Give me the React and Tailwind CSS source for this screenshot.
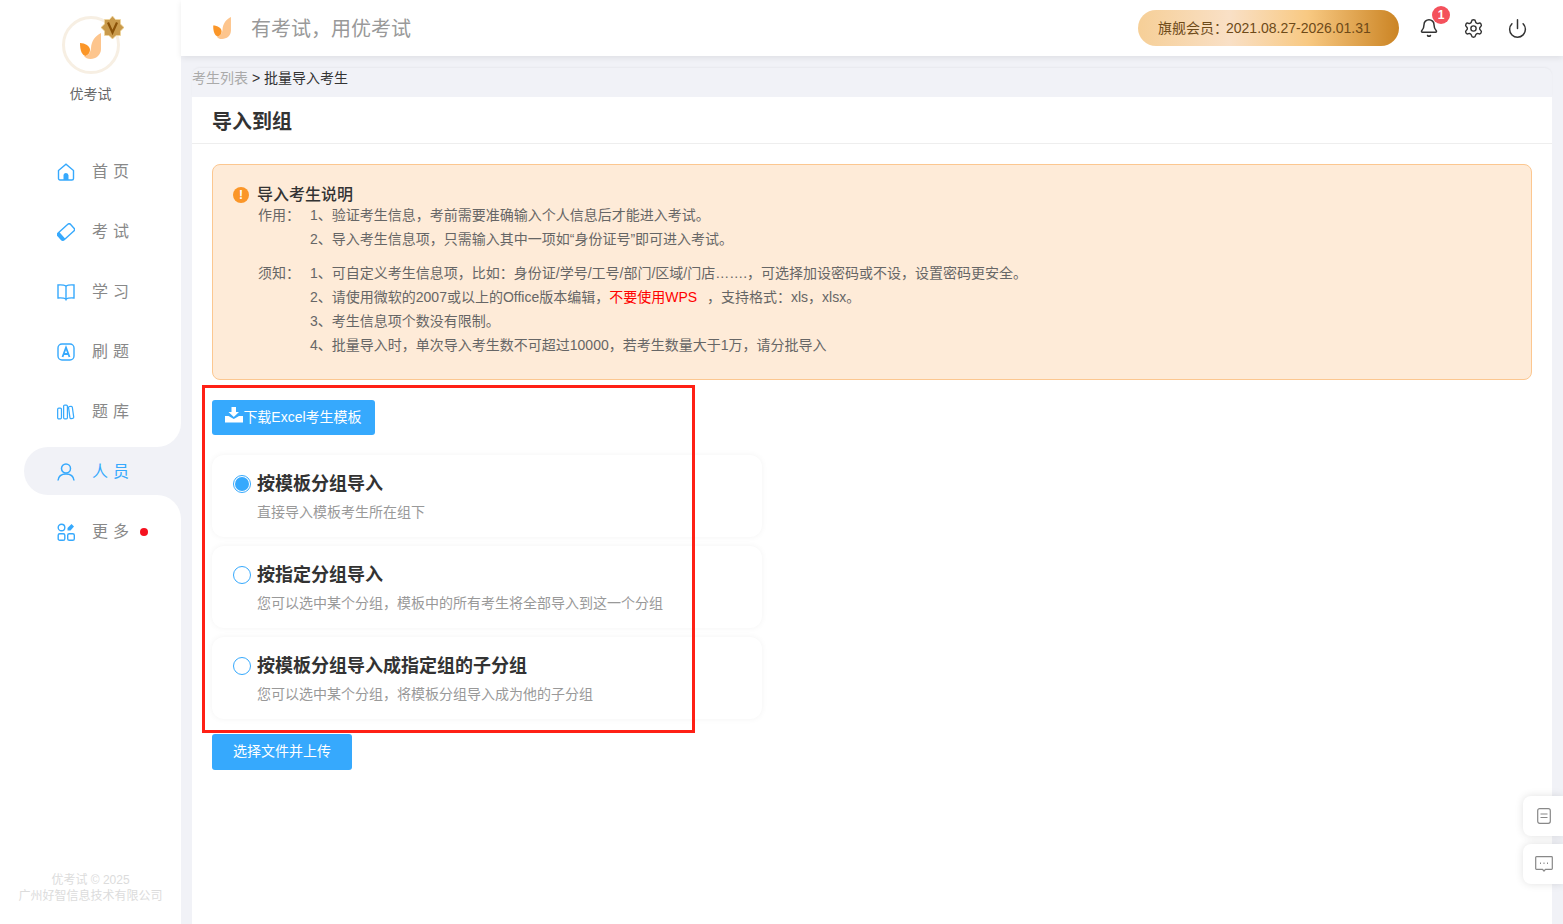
import { Bell, Settings, Power } from "lucide-react"

const font = { fontFamily: '"Liberation Sans", "Noto Sans CJK SC", sans-serif' }

function Leaf({ width, height }) {
    return (
        <svg width={width} height={height} viewBox="0 0 22 26">
            <path d="M21 0 V16 C21 22 16 26 10.500 26 C7.500 26 5.500 25 4 23 C8 23 10.500 20 11 15 C11.500 8 15 3 21 0Z" fill="#fdc58d" />
            <path d="M0 10 C5 10 10 13 10 17 C10 20 8 22 5.500 23 C2 22 0 18 0 10Z" fill="#fb9628" />
        </svg>
    )
}

function HomeIcon() {
    return (
        <svg width="18" height="18" viewBox="0 0 18 18" fill="none" stroke="#36a9fd" strokeWidth="1.400">
            <path d="M1.500 7.500 L9 1.200 L16.500 7.500 V15.500 A1.500 1.500 0 0 1 15 17 H3 A1.500 1.500 0 0 1 1.500 15.500Z" />
            <path d="M6.500 17 V12.500 A2.500 2.500 0 0 1 11.500 12.500 V17Z" fill="#36a9fd" stroke="none" />
        </svg>
    )
}

function EraserIcon() {
    return (
        <svg width="18" height="18" viewBox="0 0 18 18" fill="none" stroke="#36a9fd" strokeWidth="1.400">
            <g transform="rotate(-42 9 9)">
                <path d="M2.500 4.500 H4 V13.500 H2.500 A2 2 0 0 1 0.500 11.500 V6.500 A2 2 0 0 1 2.500 4.500Z" fill="#36a9fd" stroke="none" />
                <rect x="0.500" y="4.500" width="17" height="9" rx="2" />
            </g>
        </svg>
    )
}

function BookIcon() {
    return (
        <svg width="18" height="18" viewBox="0 0 18 18" fill="none" stroke="#36a9fd" strokeWidth="1.400">
            <path d="M9 3 C7 1.800 4 1.800 1 2 V15 C4 14.800 7 14.800 9 16 C11 14.800 14 14.800 17 15 V2 C14 1.800 11 1.800 9 3Z" />
            <path d="M9 3 V17.500" />
        </svg>
    )
}

function BrushIcon() {
    return (
        <svg width="18" height="18" viewBox="0 0 18 18" fill="none">
            <rect x="1" y="1" width="16" height="16" rx="4" stroke="#36a9fd" strokeWidth="1.400" />
            <path d="M5.500 14 L9 4.500 L12.500 14 M6.800 11 H11.200" stroke="#36a9fd" strokeWidth="1.800" />
        </svg>
    )
}

function BarsIcon() {
    return (
        <svg width="19" height="16" viewBox="0 0 19 16" fill="none" stroke="#36a9fd" strokeWidth="1.300">
            <rect x="0.700" y="4" width="4" height="11.300" rx="1.200" />
            <rect x="7" y="0.700" width="4" height="14.600" rx="1.200" />
            <rect x="13" y="2" width="4" height="13" rx="1.200" transform="rotate(-8 15 9)" />
        </svg>
    )
}

function UserIcon() {
    return (
        <svg width="18" height="18" viewBox="0 0 18 18" fill="none" stroke="#36a9fd" strokeWidth="1.500">
            <circle cx="9" cy="5.500" r="4.500" />
            <path d="M1 17.500 C1.500 13 5 11 9 11 C13 11 16.500 13 17 17.500" />
        </svg>
    )
}

function MoreIcon() {
    return (
        <svg width="18" height="18" viewBox="0 0 18 18" fill="none" stroke="#36a9fd" strokeWidth="1.400">
            <circle cx="4.500" cy="4.500" r="3.300" />
            <rect x="1.200" y="10.700" width="6.600" height="6.600" rx="1.600" />
            <rect x="10.700" y="10.700" width="6.600" height="6.600" rx="1.600" />
            <path d="M10.500 5 L14.500 1 L17 3.500 L13.500 7.500 H10.500Z" fill="#36a9fd" stroke="none" />
        </svg>
    )
}

function NavRow({ icon, label, dot, active }) {
    return (
        <div className={active ? "flex h-full items-center pl-[33px] text-[#36a9fd]" : "flex h-[60px] items-center pl-[57px] text-[#888]"}>
            <span className="flex w-[18px] justify-center">{icon}</span>
            <span className="ml-[17px] text-base tracking-[5px] whitespace-nowrap">{label}</span>
            {dot && <span className="ml-[6px] h-2 w-2 rounded-full bg-[#f5121f]"></span>}
        </div>
    )
}

function Sidebar() {
    return (
        <aside className="flex w-[181px] shrink-0 flex-col bg-white">
            <div className="flex flex-col items-center pt-[16px]">
                <div className="relative flex h-[58px] w-[58px] items-center justify-center rounded-full border-[3px] border-[#f7efe3] bg-white">
                    <span className="pt-[2px]"><Leaf width={22} height={26} /></span>
                    <svg className="absolute -top-[3px] -right-[7px]" width="23" height="23" viewBox="0 0 23 23">
                        <path d="M11.500 0 L14.500 3.500 L19.500 3.500 L19.500 8 L23 11.500 L19.500 15 L19.500 19.500 L15 19.500 L11.500 23 L8 19.500 L3.500 19.500 L3.500 15 L0 11.500 L3.500 8 L3.500 3.500 L8.500 3.500Z" fill="#c99a4b" stroke="#f0d69d" strokeWidth="0.800" />
                        <path d="M7 6.500 L11.500 16.500 L16 6.500" fill="none" stroke="#8a5208" strokeWidth="2.200" />
                    </svg>
                </div>
                <p className="mt-[10px] text-sm leading-[20px] text-[#666]">优考试</p>
            </div>

            <nav className="mt-[37px] flex flex-col pt-px">
                <NavRow icon={<HomeIcon />} label="首页" />
                <NavRow icon={<EraserIcon />} label="考试" />
                <NavRow icon={<BookIcon />} label="学习" />
                <NavRow icon={<BrushIcon />} label="刷题" />
                <div className="-mt-px bg-[#f1f2f7]">
                    <div className="h-[66px] rounded-br-[24px] bg-white pt-px pb-[5px]">
                        <NavRow icon={<BarsIcon />} label="题库" />
                    </div>
                </div>
                <div className="h-[48px] bg-white pl-[24px]">
                    <div className="h-full rounded-l-[24px] bg-[#f1f2f7] pt-px">
                        <NavRow icon={<UserIcon />} label="人员" active />
                    </div>
                </div>
                <div className="bg-[#f1f2f7]">
                    <div className="h-[66px] rounded-tr-[24px] bg-white pt-[7px]">
                        <NavRow icon={<MoreIcon />} label="更多" dot />
                    </div>
                </div>
            </nav>

            <div className="mt-auto pb-[20px] text-center text-xs leading-[16px] text-[#dcdcdc]">
                <p>优考试 © 2025</p>
                <p>广州好智信息技术有限公司</p>
            </div>
        </aside>
    )
}

function TopBar() {
    return (
        <header className="flex h-[56px] shrink-0 items-center bg-white pr-[35px] pl-[32px] shadow-[0_2px_6px_rgba(0,0,0,0.08)]">
            <Leaf width={19} height={22} />
            <p className="mt-[2px] ml-[19px] text-xl text-[#999]">有考试&#xFF0C;用优考试</p>
            <div className="ml-auto flex h-[36px] w-[261px] items-center rounded-full bg-[linear-gradient(90deg,#f6cf97_0%,#f9e0c6_35%,#f8c982_65%,#cb8424_100%)] pl-[20px] text-sm text-[#6e4a18]">
                旗舰会员&#xFF1A;<span className="-ml-[2px]">2021.08.27-2026.01.31</span>
            </div>
            <div className="relative ml-[20px]">
                <Bell size={20} color="#333" strokeWidth={1.800} />
                <span className="absolute -top-[12px] left-[13px] flex h-[18px] w-[18px] items-center justify-center rounded-full bg-[#f4515c] text-xs font-bold text-white">1</span>
            </div>
            <Settings size={21} color="#333" strokeWidth={1.600} className="ml-[24px]" />
            <Power size={21} color="#333" strokeWidth={1.700} className="ml-[23px]" />
        </header>
    )
}

function InfoRow({ label, children }) {
    return (
        <div className="flex h-[24px] items-center text-sm text-[#666]">
            <span className="w-[52px] shrink-0">{label}</span>
            <span className="whitespace-nowrap">{children}</span>
        </div>
    )
}

function Notice() {
    return (
        <div className="h-[216px] rounded-lg border border-[#fcc790] bg-[#feebd8] pt-[19px] pl-[20px]">
            <div className="flex h-[22px] items-center">
                <span className="flex h-4 w-4 items-center justify-center rounded-full bg-[#fb9628] text-xs font-bold text-white">!</span>
                <span className="ml-2 text-base font-medium text-[#333]">导入考生说明</span>
            </div>
            <div className="-mt-[3px] ml-[25px]">
                <InfoRow label={"作用\uFF1A"}>1、验证考生信息&#xFF0C;考前需要准确输入个人信息后才能进入考试。</InfoRow>
                <InfoRow>2、导入考生信息项&#xFF0C;只需输入其中一项如“身份证号”即可进入考试。</InfoRow>
                <div className="h-[10px]"></div>
                <InfoRow label={"须知\uFF1A"}>1、可自定义考生信息项&#xFF0C;比如&#xFF1A;身份证/学号/工号/部门/区域/门店…….&#xFF0C;可选择加设密码或不设&#xFF0C;设置密码更安全。</InfoRow>
                <InfoRow>2、请使用微软的2007或以上的Office版本编辑&#xFF0C;<span className="text-[#f00]">不要使用WPS</span> &nbsp;<span className="ml-[2px]">&#xFF0C;支持格式&#xFF1A;xls&#xFF0C;xlsx。</span></InfoRow>
                <InfoRow>3、考生信息项个数没有限制。</InfoRow>
                <InfoRow>4、批量导入时&#xFF0C;单次导入考生数不可超过10000&#xFF0C;若考生数量大于1万&#xFF0C;请分批导入</InfoRow>
            </div>
        </div>
    )
}

function ImportOption({ title, desc, checked }) {
    return (
        <div className="flex h-[82px] w-[550px] rounded-xl bg-white pt-[18px] pl-[21px] shadow-[0_0_6px_rgba(0,0,0,0.05)]">
            <span className="mt-[2px] flex h-[18px] w-[18px] shrink-0 items-center justify-center rounded-full border border-[#36a9fd]">
                {checked && <span className="h-[14px] w-[14px] rounded-full bg-[#36a9fd]"></span>}
            </span>
            <div className="ml-[6px]">
                <p className="text-lg leading-[22px] font-bold text-[#333]">{title}</p>
                <p className="mt-[7px] text-sm leading-[20px] text-[#999]">{desc}</p>
            </div>
        </div>
    )
}

function DownloadIcon() {
    return (
        <svg width="18" height="16" viewBox="0 0 18 16" fill="white">
            <path d="M6.500 0 H11 V5 H14 L8.800 10 L3.500 5 H6.500Z" />
            <path d="M0 9 H3.500 L8.800 12 L14 9 H18 V15.500 H0Z" />
        </svg>
    )
}

function FloatButton({ children }) {
    return (
        <div className="flex h-10 w-10 items-center justify-center rounded-l-lg bg-white pl-px shadow-[0_0_8px_rgba(0,0,0,0.12)]">
            {children}
        </div>
    )
}

export default function App() {
    return (
        <div style={font} className="relative flex h-[924px] w-[1563px] overflow-hidden bg-[#f1f2f7]">
            <Sidebar />
            <div className="flex min-w-0 flex-1 flex-col">
                <TopBar />
                <div className="mt-[12px] mr-[11px] ml-[11px] flex-1">
                    <div className="h-[29px] rounded-t-lg text-sm leading-[20px] shadow-[0_-1px_2px_rgba(0,0,0,0.04)]">
                        <span className="text-[#aaa]">考生列表</span> <span className="text-[#333]">&gt; 批量导入考生</span>
                    </div>
                    <div className="h-full bg-white">
                        <h2 className="h-[47px] border-b border-[#eee] pl-[20px] text-xl leading-[50px] font-bold text-[#333]">导入到组</h2>
                        <div className="px-[20px] pt-[20px]">
                            <Notice />
                            <button className="mt-[20px] flex h-[35px] w-[163px] items-center justify-center rounded-[3px] bg-[#36a9fd] pb-[2px] text-sm text-white">
                                <span className="-mt-1"><DownloadIcon /></span>下载Excel考生模板
                            </button>
                            <div className="mt-[20px] flex flex-col gap-[9px]">
                                <ImportOption checked title="按模板分组导入" desc="直接导入模板考生所在组下" />
                                <ImportOption title="按指定分组导入" desc={"您可以选中某个分组\uFF0C模板中的所有考生将全部导入到这一个分组"} />
                                <ImportOption title="按模板分组导入成指定组的子分组" desc={"您可以选中某个分组\uFF0C将模板分组导入成为他的子分组"} />
                            </div>
                            <button className="mt-[15px] h-[36px] w-[140px] rounded-[3px] bg-[#36a9fd] pb-[2px] text-sm text-white">选择文件并上传</button>
                        </div>
                    </div>
                </div>
            </div>

            {/* red annotation over the page */}
            <div className="absolute top-[385px] left-[202px] h-[348px] w-[493px] border-[3px] border-[#ff2015]"></div>

            <div className="absolute top-[796px] right-0 flex flex-col gap-2">
                <FloatButton>
                    <svg width="14" height="16" viewBox="0 0 14 16" fill="none" stroke="#888" strokeWidth="1.200">
                        <rect x="0.700" y="0.700" width="12.600" height="14.600" rx="2" />
                        <path d="M3.500 6 H10.500 M3.500 9.500 H10.500" />
                    </svg>
                </FloatButton>
                <FloatButton>
                    <svg width="18" height="16" viewBox="0 0 18 16" fill="none" stroke="#888" strokeWidth="1.200">
                        <path d="M1.500 0.700 H16.500 Q17.300 0.700 17.300 1.500 V12.500 Q17.300 13.300 16.500 13.300 H10.500 L9 15 L7.500 13.300 H1.500 Q0.700 13.300 0.700 12.500 V1.500 Q0.700 0.700 1.500 0.700Z" />
                        <path d="M5 7.200 H6 M8.500 7.200 H9.500 M12 7.200 H13" strokeWidth="1.500" />
                    </svg>
                </FloatButton>
            </div>
        </div>
    )
}
